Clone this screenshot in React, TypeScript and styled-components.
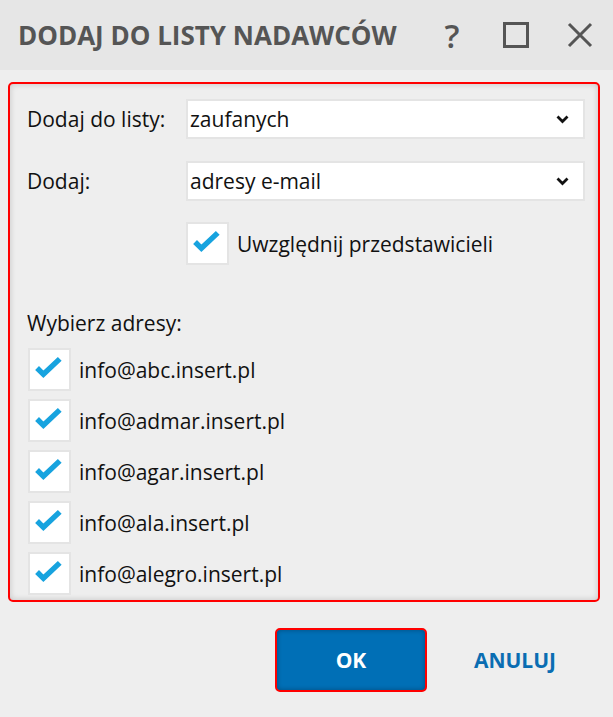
import React from "react";
import styled, { createGlobalStyle } from "styled-components";

const Global = createGlobalStyle`
  html, body { margin: 0; padding: 0; background: #eeeeee; }
  body { font-family: "Open Sans", "Noto Sans", sans-serif; color: #111; }
  * { box-sizing: border-box; }
`;

const Window = styled.div`
  width: 613px;
  height: 717px;
  background: #eeeeee;
  display: flex;
  flex-direction: column;
`;

const TitleBar = styled.div`
  height: 70px;
  background: #e6e6e6;
  display: flex;
  align-items: center;
  padding-left: 18px;
`;

const Title = styled.div`
  flex: 1;
  font-family: "Open Sans", sans-serif;
  font-weight: 700;
  font-size: 26px;
  color: #555555;
`;

const TitleIcons = styled.div`
  display: flex;
  align-items: center;
  gap: 24px;
  padding-right: 13px;
`;

const IconSlot = styled.div`
  width: 40px;
  height: 40px;
  display: flex;
  align-items: center;
  justify-content: center;
  color: #555555;
`;

const Help = styled.span`
  font-family: "Open Sans", sans-serif;
  font-size: 33px;
  font-weight: 600;
  color: #555555;
  line-height: 1;
`;

const Content = styled.div`
  padding: 12px 13px 0 8px;
`;

const Panel = styled.div`
  height: 520px;
  border: 2px solid #ff0000;
  border-radius: 5px;
  background: #eeeeee;
  box-shadow: inset 0 0 6px rgba(0, 0, 0, 0.18);
  padding: 15px 13px 0 17px;
  display: flex;
  flex-direction: column;
`;

const FormRow = styled.div<{ $mt?: number }>`
  display: grid;
  grid-template-columns: 159px 1fr;
  align-items: center;
  margin-top: ${(p) => p.$mt ?? 0}px;
`;

const Label = styled.div`
  font-size: 21px;
  color: #111;
`;

const Select = styled.div`
  height: 40px;
  background: #ffffff;
  border: 2px solid #e4e4e4;
  display: flex;
  align-items: center;
  padding: 0 14px 0 2px;
  font-size: 21px;
  color: #111;
`;

const SelectValue = styled.span`
  flex: 1;
`;

const CheckRow = styled.label<{ $mt?: number }>`
  display: flex;
  align-items: center;
  gap: 8px;
  margin-top: ${(p) => p.$mt ?? 0}px;
  font-size: 21px;
  color: #111;
`;

const Box = styled.span`
  width: 43px;
  height: 43px;
  flex: none;
  background: #ffffff;
  border: 2px solid #e4e4e4;
  display: flex;
  align-items: center;
  justify-content: center;
`;

const SectionLabel = styled.div`
  margin-top: 44px;
  margin-bottom: 11px;
  font-size: 21px;
  line-height: 28px;
  color: #111;
`;

const List = styled.div`
  display: flex;
  flex-direction: column;
  gap: 8px;
  margin-left: 1px;
`;

const Footer = styled.div`
  flex: 1;
  display: flex;
  justify-content: flex-end;
  align-items: flex-start;
  padding: 26px 33px 0 0;
  gap: 23px;
`;

const OkButton = styled.button`
  width: 152px;
  height: 64px;
  background: #006fb6;
  border: 2px solid #ff0000;
  border-radius: 5px;
  color: #ffffff;
  font-family: "Open Sans", sans-serif;
  font-weight: 700;
  font-size: 21px;
  box-shadow: inset 0 0 5px rgba(0, 0, 0, 0.3);
`;

const CancelButton = styled.button`
  width: 130px;
  height: 64px;
  background: transparent;
  border: none;
  color: #0a6db2;
  font-family: "Open Sans", sans-serif;
  font-weight: 700;
  font-size: 21px;
`;

const Check = () => (
  <svg width="43" height="43" viewBox="0 0 43 43" style={{ position: "relative", left: -2, top: -2 }}>
    <polyline points="10,22 17,29 35,12" fill="none" stroke="#17a3df" strokeWidth="6" />
  </svg>
);

const Chevron = () => (
  <svg width="13" height="9" viewBox="0 0 13 9">
    <polyline points="1.5,1.5 6.5,6.5 11.5,1.5" fill="none" stroke="#111" strokeWidth="2.8" />
  </svg>
);

const emails = [
  "info@abc.insert.pl",
  "info@admar.insert.pl",
  "info@agar.insert.pl",
  "info@ala.insert.pl",
  "info@alegro.insert.pl",
];

export default function App() {
  return (
    <>
      <Global />
      <Window>
        <TitleBar>
          <Title>DODAJ DO LISTY NADAWCÓW</Title>
          <TitleIcons>
            <IconSlot>
              <Help>?</Help>
            </IconSlot>
            <IconSlot>
              <svg width="26" height="26" viewBox="0 0 26 26">
                <rect x="1.5" y="1.5" width="23" height="23" fill="none" stroke="#555" strokeWidth="3" />
              </svg>
            </IconSlot>
            <IconSlot>
              <svg width="26" height="26" viewBox="0 0 26 26">
                <path d="M2 2 L24 24 M24 2 L2 24" stroke="#555" strokeWidth="3" />
              </svg>
            </IconSlot>
          </TitleIcons>
        </TitleBar>
        <Content>
          <Panel>
            <FormRow>
              <Label>Dodaj do listy:</Label>
              <Select>
                <SelectValue>zaufanych</SelectValue>
                <Chevron />
              </Select>
            </FormRow>
            <FormRow $mt={22}>
              <Label>Dodaj:</Label>
              <Select>
                <SelectValue>adresy e-mail</SelectValue>
                <Chevron />
              </Select>
            </FormRow>
            <FormRow $mt={21}>
              <span />
              <CheckRow>
                <Box>
                  <Check />
                </Box>
                Uwzględnij przedstawicieli
              </CheckRow>
            </FormRow>
            <SectionLabel>Wybierz adresy:</SectionLabel>
            <List>
              {emails.map((e) => (
                <CheckRow key={e}>
                  <Box>
                    <Check />
                  </Box>
                  {e}
                </CheckRow>
              ))}
            </List>
          </Panel>
        </Content>
        <Footer>
          <OkButton>OK</OkButton>
          <CancelButton>ANULUJ</CancelButton>
        </Footer>
      </Window>
    </>
  );
}
